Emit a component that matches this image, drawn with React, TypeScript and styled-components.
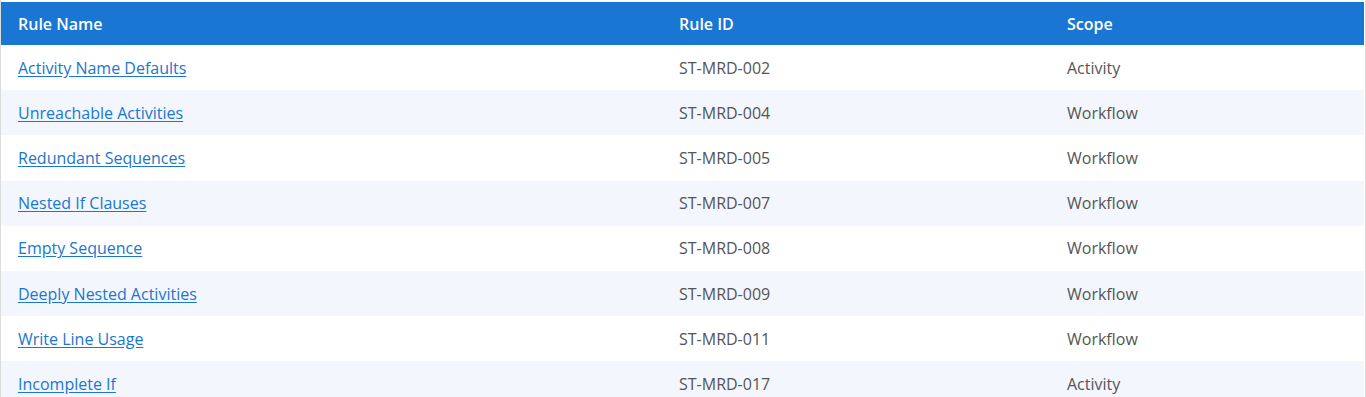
import styled, { createGlobalStyle } from "styled-components"

interface Rule {
    name: string
    id: string
    scope: string
}

const rules: Rule[] = [
    { name: "Activity Name Defaults", id: "ST-MRD-002", scope: "Activity" },
    { name: "Unreachable Activities", id: "ST-MRD-004", scope: "Workflow" },
    { name: "Redundant Sequences", id: "ST-MRD-005", scope: "Workflow" },
    { name: "Nested If Clauses", id: "ST-MRD-007", scope: "Workflow" },
    { name: "Empty Sequence", id: "ST-MRD-008", scope: "Workflow" },
    { name: "Deeply Nested Activities", id: "ST-MRD-009", scope: "Workflow" },
    { name: "Write Line Usage", id: "ST-MRD-011", scope: "Workflow" },
    { name: "Incomplete If", id: "ST-MRD-017", scope: "Activity" },
]

const GlobalStyle = createGlobalStyle`
    body {
        margin: 0;
        background: #fff;
        font-family: "Open Sans", "Noto Sans", sans-serif;
        overflow: hidden;
    }
`

const Wrapper = styled.div`
    border-left: 1px solid #dcdcdc;
    border-right: 1px solid #dcdcdc;
    padding-top: 2px;
    padding-right: 1px;
    height: 397px;
    box-sizing: border-box;
`

const Table = styled.table`
    width: 100%;
    border-collapse: collapse;
    table-layout: fixed;
    font-size: 16px;
`

const HeadCell = styled.th<{ width?: number }>`
    width: ${props => props.width ? `${props.width}px` : 'auto'};
    background-color: #1976d2;
    color: #fff;
    font-weight: 600;
    text-align: left;
    height: 43px;
    padding: 0 17px;
    box-sizing: border-box;
`

const Row = styled.tr<{ striped?: boolean }>`
    background-color: ${props => props.striped ? '#f3f6fc' : '#fff'};
`

const Cell = styled.td`
    height: 45.2px;
    padding: 0 17px;
    color: #555;
    box-sizing: border-box;

    a {
        color: #1976d2;
        text-decoration: underline;
        text-underline-offset: 2px;
    }
`

export default function App() {
    return (
        <>
            <GlobalStyle />
            <Wrapper>
                <Table>
                    <thead>
                        <tr>
                            <HeadCell width={661}>Rule Name</HeadCell>
                            <HeadCell width={388}>Rule ID</HeadCell>
                            <HeadCell>Scope</HeadCell>
                        </tr>
                    </thead>
                    <tbody>
                        {rules.map((rule, i) => (
                            <Row key={rule.id} striped={i % 2 === 1}>
                                <Cell><a href="#">{rule.name}</a></Cell>
                                <Cell>{rule.id}</Cell>
                                <Cell>{rule.scope}</Cell>
                            </Row>
                        ))}
                    </tbody>
                </Table>
            </Wrapper>
        </>
    )
}
